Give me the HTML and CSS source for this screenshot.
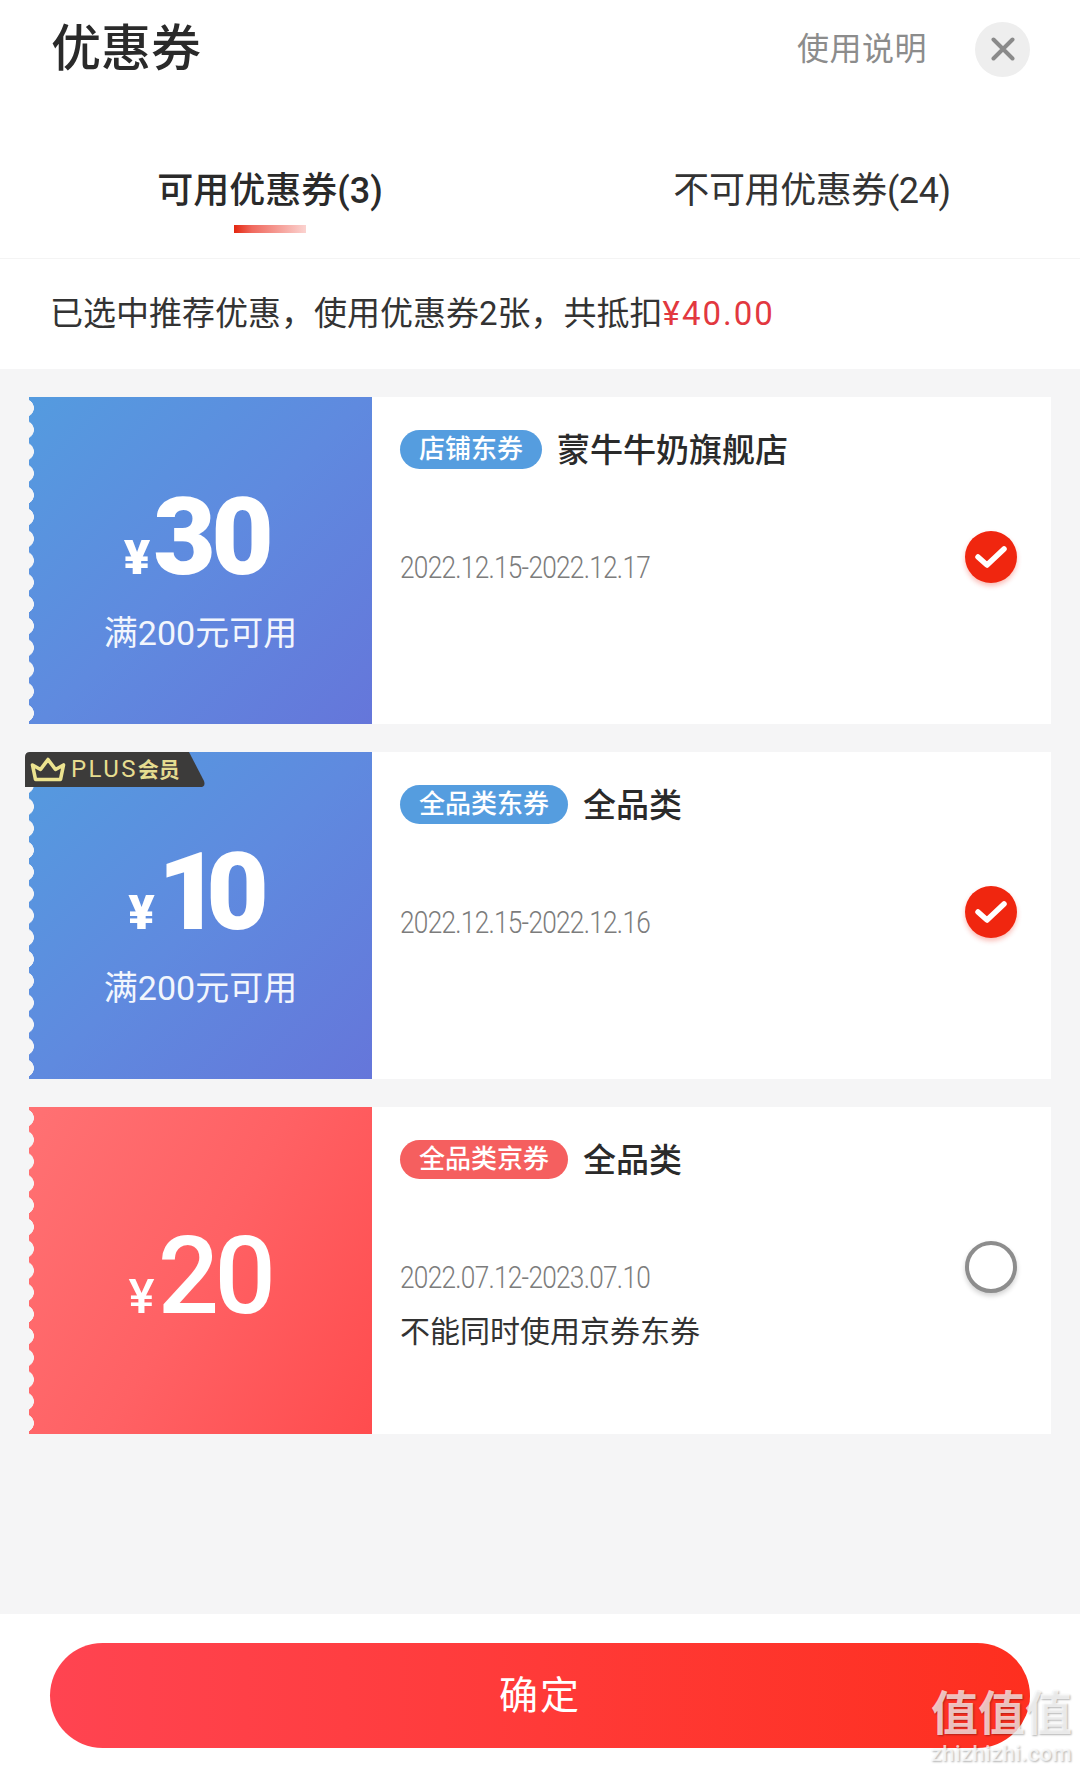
FILE: index.html
```html
<!DOCTYPE html>
<html lang="zh-CN">
<head>
<meta charset="utf-8">
<title>优惠券</title>
<link rel="stylesheet" href="styles.css">
</head>
<body>
<main class="sheet">
  <header class="top">
    <h1 class="title">优惠券</h1>
    <span class="help">使用说明</span>
    <button class="close" aria-label="关闭">
      <svg width="24" height="24" viewBox="0 0 24 24"><path d="M2.5 2.5 21.5 21.5M21.5 2.5 2.5 21.5" class="close-x"/></svg>
    </button>
  </header>
  <nav class="tabs">
    <div class="tab tab-on"><span>可用优惠券(3)</span><i class="tab-bar"></i></div>
    <div class="tab tab-off"><span>不可用优惠券(24)</span></div>
  </nav>
  <p class="summary">已选中推荐优惠，使用优惠券2张，共抵扣<em class="sum">¥40.00</em></p>
  <section class="list">
    <article class="coupon">
      <div class="face face-blue">
        <div class="price price-heavy"><span class="yen">¥</span><span class="amt">30</span></div>
        <div class="cond">满200元可用</div>
      </div>
      <div class="info">
        <div class="text">
          <div class="head"><span class="pill pill-blue">店铺东券</span><span class="name">蒙牛牛奶旗舰店</span></div>
          <div class="date">2022.12.15-2022.12.17</div>
        </div>
        <span class="check check-on"><svg width="32" height="22" viewBox="0 0 32 22"><path class="tick" d="M3 11 12 19 29 3"/></svg></span>
      </div>
    </article>
    <article class="coupon">
      <div class="badge">
        <svg class="badge-bg" width="180" height="35" viewBox="0 0 180 35"><path d="M5 0H164L179 29Q181 35 175 35H0V5Q0 0 5 0Z" fill="#3c3b3a"/></svg>
        <svg class="crown" width="36" height="26" viewBox="0 0 36 26"><path d="M5.5 22.5 2.5 8 10.5 12.5 18 2.5 25.5 12.5 33.5 8 30.5 22.5Z" fill="none" stroke="#ece38f" stroke-width="3.6" stroke-linejoin="round"/></svg>
        <span class="plus">PLUS<b class="vip">会员</b></span>
      </div>
      <div class="face face-blue">
        <div class="price price-heavy price-ten"><span class="yen">¥</span><span class="amt">10</span></div>
        <div class="cond">满200元可用</div>
      </div>
      <div class="info">
        <div class="text">
          <div class="head"><span class="pill pill-blue">全品类东券</span><span class="name">全品类</span></div>
          <div class="date">2022.12.15-2022.12.16</div>
        </div>
        <span class="check check-on"><svg width="32" height="22" viewBox="0 0 32 22"><path class="tick" d="M3 11 12 19 29 3"/></svg></span>
      </div>
    </article>
    <article class="coupon">
      <div class="face face-red">
        <div class="price price-mid"><span class="yen">¥</span><span class="amt">20</span></div>
      </div>
      <div class="info">
        <div class="text">
          <div class="head"><span class="pill pill-red">全品类京券</span><span class="name">全品类</span></div>
          <div class="date">2022.07.12-2023.07.10</div>
          <div class="note">不能同时使用京券东券</div>
        </div>
        <span class="check check-off"></span>
      </div>
    </article>
  </section>
  <footer class="foot">
    <button class="ok">确定</button>
    <div class="mark"><span class="mark-cn">值值值</span><span class="mark-en">zhizhizhi.com</span></div>
  </footer>
</main>
</body>
</html>
```
FILE: styles.css
```css
* { box-sizing: border-box; }
html, body { margin: 0; padding: 0; }
body {
  width: 1080px;
  height: 1770px;
  overflow: hidden;
  background: #fff;
  font-family: Roboto, "Noto Sans CJK SC", sans-serif;
  color: #262626;
}
.sheet { display: flex; flex-direction: column; height: 1770px; }

.top { display: flex; align-items: center; height: 98px; padding: 0 50px 0 51px; }
.title { margin: 0; flex: 1; font-size: 50px; line-height: 60px; font-weight: 500; color: #2a2a2a; }
.help { font-size: 32px; line-height: 40px; color: #8c8c8c; margin-right: 48px; letter-spacing: .5px; }
.close {
  display: flex; align-items: center; justify-content: center;
  width: 55px; height: 55px; padding: 0; border: 0; border-radius: 50%; background: #eeeeee;
}
.close-x { fill: none; stroke: #8a8a8a; stroke-width: 4; stroke-linecap: round; }

.tabs { display: grid; grid-template-columns: 1fr 1fr; height: 161px; padding-top: 72px; border-bottom: 1px solid #f4f4f4; }
.tab { display: flex; flex-direction: column; align-items: center; font-size: 36px; line-height: 42px; color: #333; }
.tab-on { font-weight: 500; color: #2a2a2a; }
.tab-off { padding-left: 4px; letter-spacing: -.4px; }
.tab-bar { width: 72px; height: 8px; margin-top: 13px; background: linear-gradient(90deg, #e4260f 0, #f0695e 25%, #fbd3d0 100%); }

.summary { margin: 0; height: 110px; display: flex; align-items: center; padding-left: 50px; font-size: 33px; line-height: 40px; color: #333; }
.sum { font-style: normal; color: #e2383f; letter-spacing: 2px; }

.list { flex: 1; display: flex; flex-direction: column; gap: 28px; padding: 28px 29px 0; background: #f5f5f6; }
.coupon { position: relative; display: grid; grid-template-columns: 343px 1fr; height: 327px; }

.face { position: relative; color: #fff; text-align: center; }
.face::before {
  content: ""; position: absolute; left: 0; top: 0; bottom: 0; width: 6px;
  background: radial-gradient(circle at -4px 11px, #f5f5f6 0, #f5f5f6 8.6px, transparent 9.2px) 0 0 / 6px 21.8px repeat-y;
}
.face-blue { background: linear-gradient(135deg, #549bdf 0%, #5f8adf 50%, #6576da 100%); }
.face-red { background: linear-gradient(120deg, #ff7173 0%, #ff6164 50%, #ff4c4e 100%); }

.price { display: flex; align-items: baseline; justify-content: center; }
.price-heavy { padding: 86px 8px 0 0; font-weight: 900; }
.price-ten { padding-right: 18px; }
.price-ten .yen { margin-right: 3px; }
.price-ten .amt { letter-spacing: -14px; }
.price-mid { padding: 115px 1px 0 0; font-weight: 500; }
.yen { font-size: 49px; line-height: 108px; margin-right: 3px; }
.amt { font-size: 108px; line-height: 108px; letter-spacing: -4.5px; }
.cond { margin-top: 1px; font-size: 34px; line-height: 40px; color: #f2f6fd; }

.info { display: flex; align-items: center; background: #fff; padding: 0 34px 0 28px; }
.text { flex: 1; align-self: flex-start; padding-top: 33px; }
.head { display: flex; align-items: center; gap: 15px; height: 39px; }
.pill { height: 39px; padding: 0 19px; border-radius: 20px; color: #fff; font-size: 26px; line-height: 39px; font-weight: 500; }
.pill-blue { background: #559ddf; }
.pill-red { background: #f55f5f; }
.name { padding-top: 2px; font-size: 33px; line-height: 42px; font-weight: 500; color: #2a2a2a; }
.date { margin-top: 80px; font-size: 32px; line-height: 36px; font-weight: 300; letter-spacing: -.9px; color: #7c7c7c; transform: scaleX(.82); transform-origin: left center; }
.note { margin-top: 17px; font-size: 30px; line-height: 40px; color: #333; }

.check { display: flex; align-items: center; justify-content: center; width: 52px; height: 52px; margin-bottom: 7px; border-radius: 50%; flex: none; }
.check-on { background: #f0260f; box-shadow: 0 3px 5px rgba(240, 38, 15, .3); }
.check-off { border: 4px solid #8d8d8d; background: #fff; box-shadow: 0 3px 5px rgba(0, 0, 0, .18); }
.tick { fill: none; stroke: #fff; stroke-width: 5.5; stroke-linecap: round; stroke-linejoin: round; }

.badge { position: absolute; z-index: 1; left: -4px; top: 0; width: 180px; height: 35px; display: flex; align-items: center; padding-left: 5px; color: #e6dd90; }
.badge-bg { position: absolute; left: 0; top: 0; }
.crown { position: relative; flex: none; }
.plus { position: relative; margin-left: 5px; font-size: 24px; line-height: 30px; letter-spacing: 2.4px; white-space: nowrap; }
.vip { font-size: 21px; letter-spacing: 0; }

.foot { position: relative; height: 156px; padding: 29px 50px 0; background: #fff; }
.ok {
  display: block; width: 100%; height: 105px; padding: 0; border: 0; border-radius: 53px;
  background: linear-gradient(90deg, #ff4451 0%, #ff3a38 50%, #fe2f1f 100%);
  color: #fff; font: 400 39px/107px Roboto, "Noto Sans CJK SC", sans-serif; letter-spacing: 2px;
}
.mark { position: absolute; right: 8px; top: 72px; display: flex; flex-direction: column; align-items: center; color: rgba(255, 255, 255, .72); text-shadow: 1px 1px 2px rgba(0, 0, 0, .3); }
.mark-cn { font-size: 47px; line-height: 56px; font-weight: 700; }
.mark-en { font-size: 22px; line-height: 24px; font-weight: 500; letter-spacing: .4px; }
```
